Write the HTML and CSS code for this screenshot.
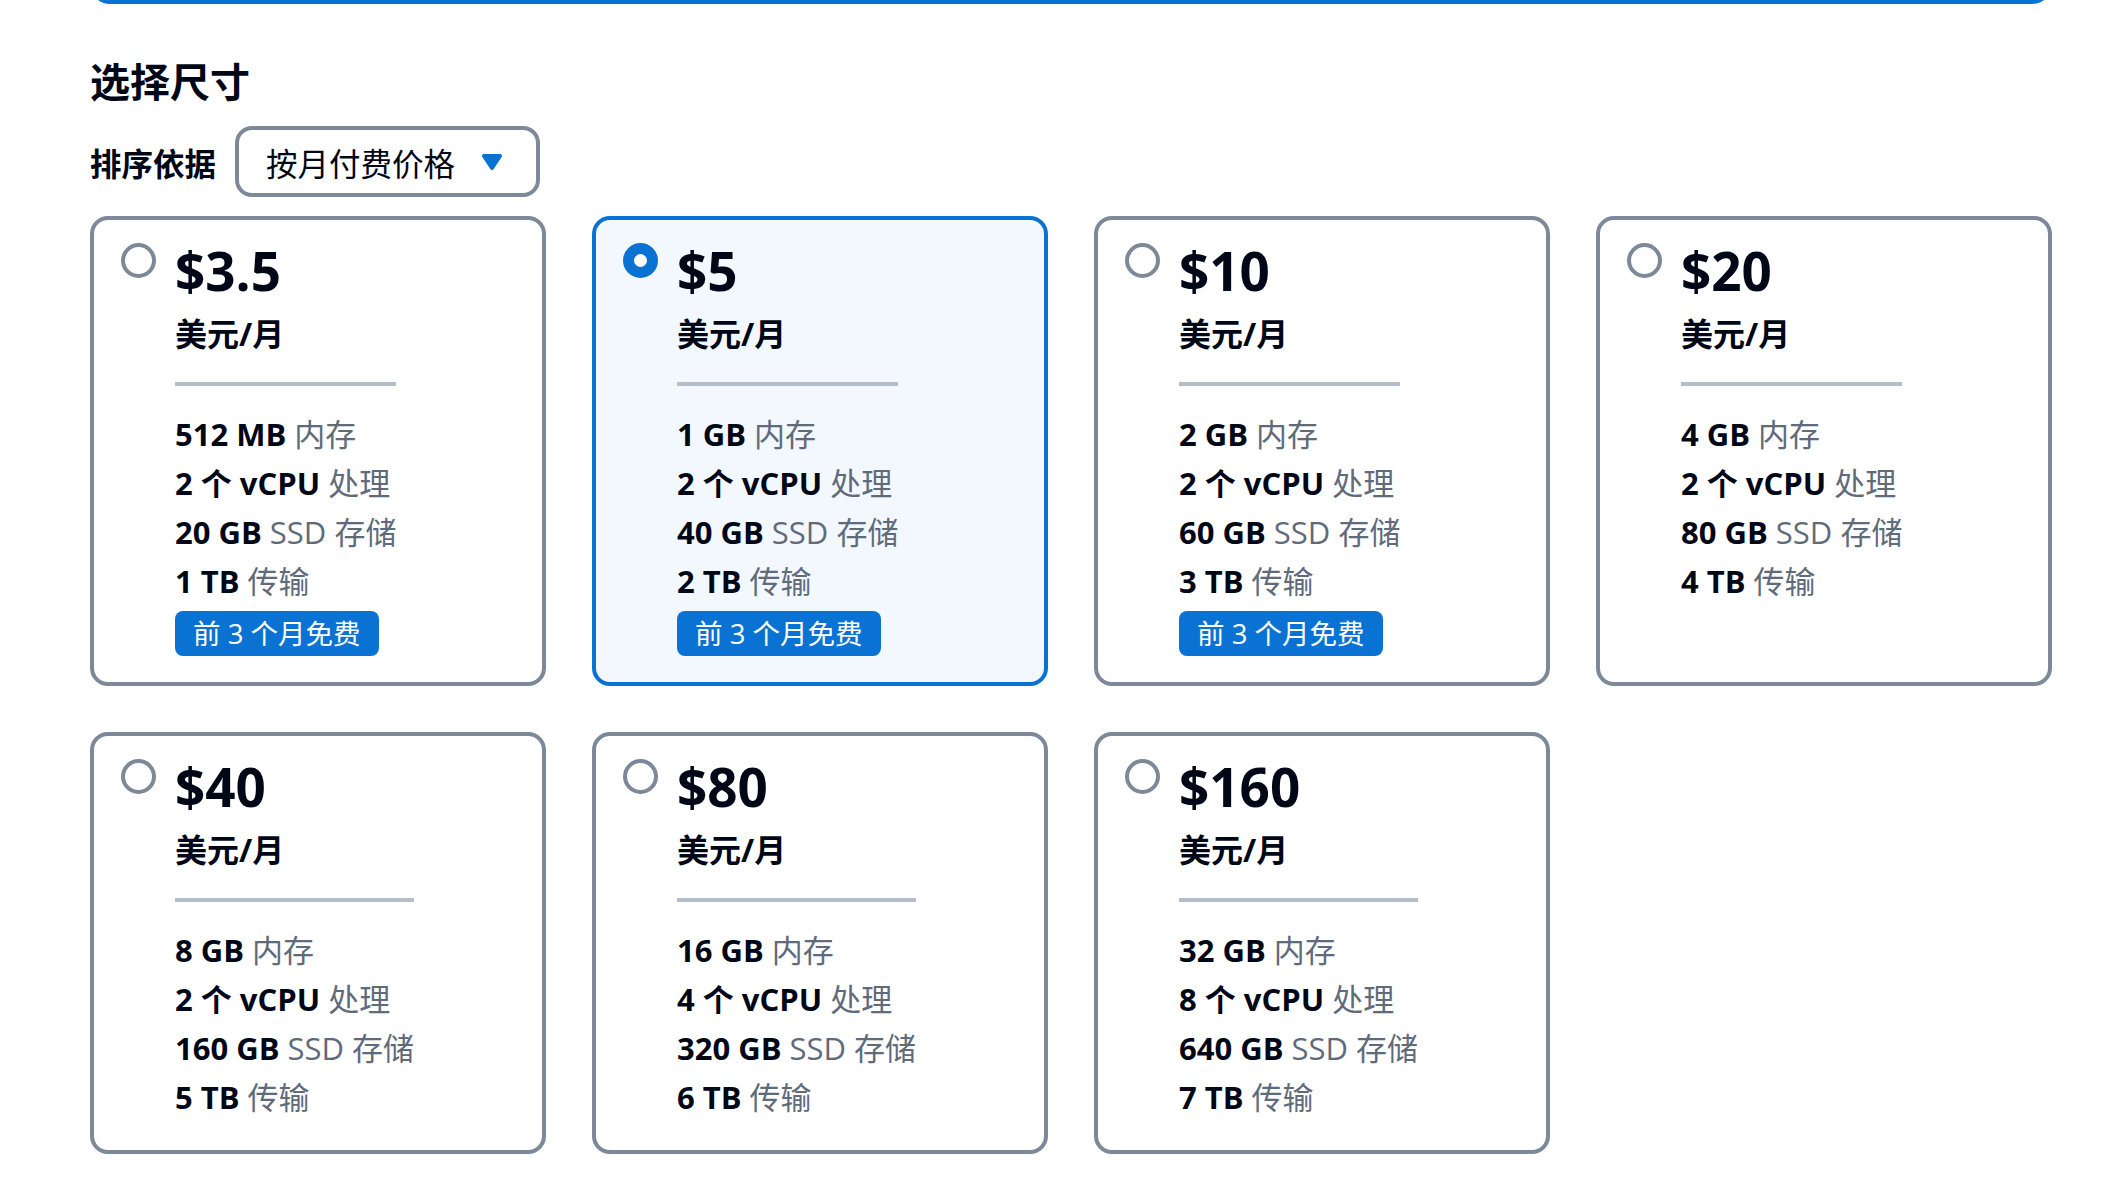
FILE: index.html
```html
<!DOCTYPE html>
<html lang="zh-CN">
<head>
<meta charset="utf-8">
<title>选择尺寸</title>
<link rel="stylesheet" href="styles.css">
</head>
<body>
<div class="page">
  <div class="prev-panel"></div>
  <h2 class="title">选择尺寸</h2>
  <div class="sort">
    <span class="sort-label">排序依据</span>
    <div class="select">
      <span class="select-value">按月付费价格</span>
      <svg class="caret" width="22" height="18" viewBox="0 0 22 18"><polygon points="3,3 19,3 11,15" fill="#0972d3" stroke="#0972d3" stroke-width="4" stroke-linejoin="round"/></svg>
    </div>
  </div>
  <div class="grid">
    <div class="tile">
      <span class="radio"></span>
      <div class="info">
        <div class="price">$3.5</div>
        <div class="unit">美元/月</div>
        <div class="divider"></div>
        <ul class="specs">
          <li><b>512 MB</b> 内存</li>
          <li><b>2 个 vCPU</b> 处理</li>
          <li><b>20 GB</b> SSD 存储</li>
          <li><b>1 TB</b> 传输</li>
        </ul>
        <span class="badge">前 3 个月免费</span>
      </div>
    </div>
    <div class="tile selected">
      <span class="radio checked"></span>
      <div class="info">
        <div class="price">$5</div>
        <div class="unit">美元/月</div>
        <div class="divider"></div>
        <ul class="specs">
          <li><b>1 GB</b> 内存</li>
          <li><b>2 个 vCPU</b> 处理</li>
          <li><b>40 GB</b> SSD 存储</li>
          <li><b>2 TB</b> 传输</li>
        </ul>
        <span class="badge">前 3 个月免费</span>
      </div>
    </div>
    <div class="tile">
      <span class="radio"></span>
      <div class="info">
        <div class="price">$10</div>
        <div class="unit">美元/月</div>
        <div class="divider"></div>
        <ul class="specs">
          <li><b>2 GB</b> 内存</li>
          <li><b>2 个 vCPU</b> 处理</li>
          <li><b>60 GB</b> SSD 存储</li>
          <li><b>3 TB</b> 传输</li>
        </ul>
        <span class="badge">前 3 个月免费</span>
      </div>
    </div>
    <div class="tile">
      <span class="radio"></span>
      <div class="info">
        <div class="price">$20</div>
        <div class="unit">美元/月</div>
        <div class="divider"></div>
        <ul class="specs">
          <li><b>4 GB</b> 内存</li>
          <li><b>2 个 vCPU</b> 处理</li>
          <li><b>80 GB</b> SSD 存储</li>
          <li><b>4 TB</b> 传输</li>
        </ul>
      </div>
    </div>
    <div class="tile">
      <span class="radio"></span>
      <div class="info">
        <div class="price">$40</div>
        <div class="unit">美元/月</div>
        <div class="divider"></div>
        <ul class="specs">
          <li><b>8 GB</b> 内存</li>
          <li><b>2 个 vCPU</b> 处理</li>
          <li><b>160 GB</b> SSD 存储</li>
          <li><b>5 TB</b> 传输</li>
        </ul>
      </div>
    </div>
    <div class="tile">
      <span class="radio"></span>
      <div class="info">
        <div class="price">$80</div>
        <div class="unit">美元/月</div>
        <div class="divider"></div>
        <ul class="specs">
          <li><b>16 GB</b> 内存</li>
          <li><b>4 个 vCPU</b> 处理</li>
          <li><b>320 GB</b> SSD 存储</li>
          <li><b>6 TB</b> 传输</li>
        </ul>
      </div>
    </div>
    <div class="tile">
      <span class="radio"></span>
      <div class="info">
        <div class="price">$160</div>
        <div class="unit">美元/月</div>
        <div class="divider"></div>
        <ul class="specs">
          <li><b>32 GB</b> 内存</li>
          <li><b>8 个 vCPU</b> 处理</li>
          <li><b>640 GB</b> SSD 存储</li>
          <li><b>7 TB</b> 传输</li>
        </ul>
      </div>
    </div>
  </div>
</div>
</body>
</html>
```
FILE: styles.css
```css
* { box-sizing: border-box; }
html, body { margin: 0; padding: 0; background: #ffffff; }
body {
  font-family: "Open Sans", "Noto Sans CJK SC", sans-serif;
  color: #000716;
  overflow: hidden;
}
.page {
  padding: 0 58px 0 90px;
}
.prev-panel {
  height: 40px;
  margin-top: -36px;
  border: 4px solid #0972d3;
  border-radius: 28px;
}
.title {
  margin: 54px 0 0;
  font-size: 40px;
  line-height: 48px;
  font-weight: 700;
}
.sort {
  display: flex;
  align-items: center;
  gap: 19px;
  margin-top: 20px;
}
.sort-label {
  font-size: 31.5px;
  font-weight: 700;
}
.select {
  display: flex;
  align-items: center;
  gap: 26px;
  height: 71px;
  padding: 0 33px 0 27px;
  border: 4px solid #7d8998;
  border-radius: 17px;
  font-size: 31.5px;
}
.caret { display: block; }
.grid {
  display: grid;
  grid-template-columns: repeat(4, 1fr);
  gap: 46px;
  margin-top: 19px;
}
.tile {
  display: flex;
  align-items: flex-start;
  gap: 19px;
  padding: 15px 27px 28px;
  border: 4px solid #7d8998;
  border-radius: 18px;
  background: #ffffff;
}
.tile.selected {
  border-color: #0972d3;
  background: #f2f8fd;
}
.radio {
  flex: none;
  width: 35px;
  height: 35px;
  margin-top: 8px;
  border: 4px solid #7d8998;
  border-radius: 50%;
  background: #ffffff;
}
.radio.checked {
  border: 11px solid #0972d3;
}
.info {
  display: flex;
  flex-direction: column;
}
.price {
  font-size: 53px;
  line-height: 71px;
  font-weight: 700;
}
.unit {
  margin-top: 6px;
  font-size: 32px;
  line-height: 44px;
  font-weight: 700;
}
.divider {
  margin-top: 26px;
  height: 4px;
  background: #b6bec9;
}
.specs {
  list-style: none;
  margin: 24px 0 0;
  padding: 0;
  font-size: 31px;
  line-height: 49px;
  color: #5f6b7a;
  white-space: nowrap;
}
.specs b {
  color: #000716;
  font-weight: 700;
}
.badge {
  align-self: flex-start;
  margin: 5px 0 -2px;
  height: 45px;
  padding: 0 18px;
  border-radius: 8px;
  background: #0972d3;
  color: #ffffff;
  font-size: 27.5px;
  line-height: 45px;
  white-space: nowrap;
}
```
